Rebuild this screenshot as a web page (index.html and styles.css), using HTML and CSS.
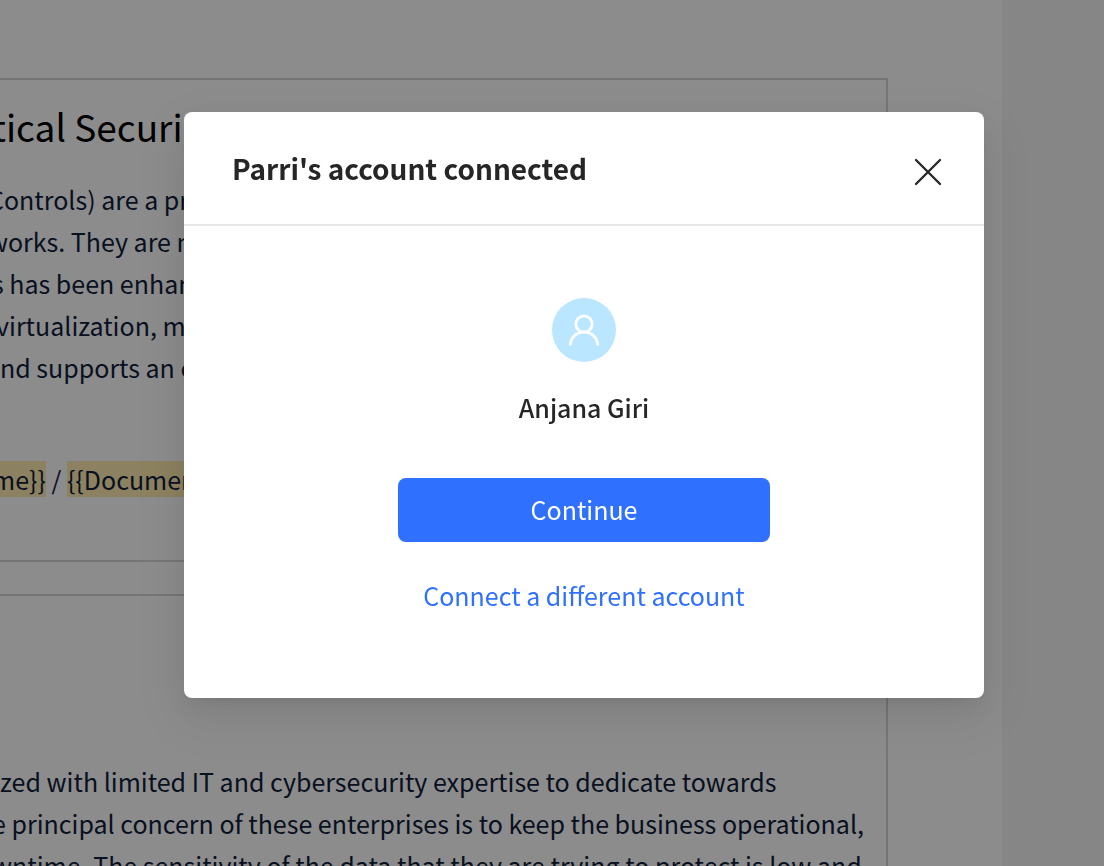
FILE: index.html
```html
<!DOCTYPE html>
<html lang="en">
<head>
<meta charset="utf-8">
<meta name="viewport" content="width=device-width, initial-scale=1">
<title>Account connected</title>
<link rel="stylesheet" href="styles.css">
</head>
<body>
<main class="page">
  <section class="block block-first">
    <h1 class="block-title cut">tical Securi</h1>
    <p class="copy">
      <span class="line cut-wide">Controls) are a pri</span>
      <span class="line cut-wide">works. They are m</span>
      <span class="line cut">s has been enhan</span>
      <span class="line cut-slight">virtualization, mo</span>
      <span class="line">nd supports an e</span>
    </p>
    <p class="copy fields"><span class="line cut"><mark>me}}</mark> / <mark>{{Documen</mark></span></p>
  </section>
  <section class="block block-second">
    <p class="copy">
      <span class="line">zed with limited IT and cybersecurity expertise to dedicate towards</span>
      <span class="line cut">e principal concern of these enterprises is to keep the business operational,</span>
      <span class="line cut">wntime. The sensitivity of the data that they are trying to protect is low and</span>
    </p>
  </section>
</main>
<div class="overlay">
  <div class="dialog" role="dialog" aria-modal="true" aria-labelledby="dialog-title">
    <header class="dialog-header">
      <h2 class="dialog-title" id="dialog-title">Parri's account connected</h2>
      <button class="close" type="button" aria-label="Close">
        <svg width="28" height="28" viewBox="0 0 28 28" fill="none" stroke="currentColor" stroke-width="2.3" stroke-linecap="round" aria-hidden="true"><path d="M2 2 26 26M26 2 2 26"/></svg>
      </button>
    </header>
    <div class="dialog-body">
      <div class="avatar">
        <svg width="32" height="34" viewBox="0 0 32 34" fill="none" stroke="currentColor" stroke-width="2.8" aria-hidden="true"><circle cx="16" cy="11" r="8.2"/><path d="M2.4 32.6v-.8a13.6 12.6 0 0 1 27.2 0v.8"/></svg>
      </div>
      <p class="name">Anjana Giri</p>
      <button class="primary" type="button">Continue</button>
      <a class="link" href="#">Connect a different account</a>
    </div>
  </div>
</div>
</body>
</html>
```
FILE: styles.css
```css
* { box-sizing: border-box; }
body {
  margin: 0;
  height: 100vh;
  overflow: hidden;
  background: #f4f4f4;
  color: #10203a;
  font-family: "Noto Sans CJK SC", "Noto Sans", sans-serif;
  font-size: 25px;
  line-height: 42px;
}
h1, h2, p { margin: 0; }
.page {
  min-height: 100vh;
  margin-right: 102px;
  padding: 78px 114px 0 0;
  background: #fff;
}
.block {
  border: 2px solid #d6d6d6;
  border-left: 0;
}
.block-first { height: 484px; padding-top: 16px; }
.block-second { margin-top: 32px; padding-top: 164px; }
.block-title {
  color: #000;
  font-size: 37px;
  font-weight: 400;
  line-height: 60px;
}
.block-title + .copy { margin-top: 22px; }
.line { display: block; white-space: nowrap; }
.cut-slight { margin-left: -4px; }
.cut { margin-left: -8px; }
.cut-wide { margin-left: -12px; }
.fields { margin-top: 70px; }
mark { padding: 0; background: #ffecaf; color: inherit; }
.overlay {
  position: fixed;
  inset: 0;
  display: flex;
  justify-content: center;
  align-items: flex-start;
  padding: 112px 0 0 64px;
  background: rgba(0, 0, 0, 0.45);
}
.dialog {
  width: 800px;
  max-width: 100%;
  border-radius: 8px;
  background: #fff;
  color: #262626;
  box-shadow: 0 6px 12px -8px rgba(0, 0, 0, 0.12), 0 12px 32px rgba(0, 0, 0, 0.08), 0 18px 56px 16px rgba(0, 0, 0, 0.05);
}
.dialog-header {
  display: flex;
  align-items: flex-start;
  justify-content: space-between;
  padding: 32px 42px 32px 48px;
  border-bottom: 2px solid #e8e8e8;
}
.dialog-title { font-size: 28px; font-weight: 700; line-height: 48px; }
button { font: inherit; border: 0; cursor: pointer; }
.close { display: flex; margin-top: 14px; padding: 0; background: none; color: #262626; }
.dialog-body {
  display: flex;
  flex-direction: column;
  align-items: center;
  padding: 72px 48px 82px;
}
.avatar {
  display: flex;
  align-items: center;
  justify-content: center;
  width: 64px;
  height: 64px;
  border-radius: 50%;
  background: #bae7ff;
  color: #fff;
}
.name { margin-top: 24px; font-weight: 500; }
.primary {
  width: 372px;
  max-width: 100%;
  height: 64px;
  margin-top: 50px;
  padding: 0 0 2px;
  border-radius: 8px;
  background: #2f70ff;
  color: #fff;
}
.link { margin-top: 32px; color: #2f70ff; text-decoration: none; }
```
